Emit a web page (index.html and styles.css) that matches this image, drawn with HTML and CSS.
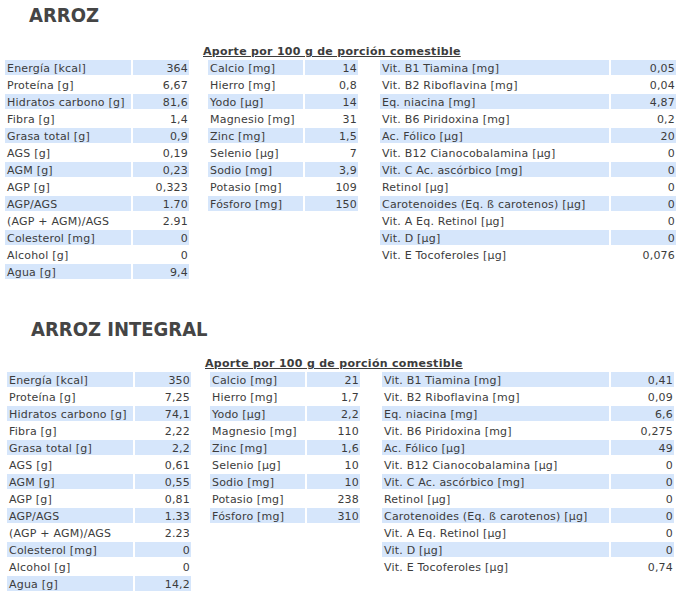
FILE: index.html
```html
<!DOCTYPE html>
<html lang="es">
<head>
<meta charset="utf-8">
<title>Arroz</title>
<link rel="stylesheet" href="styles.css">
</head>
<body>
<section class="food">
  <h1 class="food-title">ARROZ</h1>
  <div class="food-grid">
    <div class="food-heading">Aporte por 100 g de porción comestible</div>
    <table class="nt nt-1">
      <tr><td>Energía [kcal]</td><td>364</td></tr>
      <tr><td>Proteína [g]</td><td>6,67</td></tr>
      <tr><td>Hidratos carbono [g]</td><td>81,6</td></tr>
      <tr><td>Fibra [g]</td><td>1,4</td></tr>
      <tr><td>Grasa total [g]</td><td>0,9</td></tr>
      <tr><td>AGS [g]</td><td>0,19</td></tr>
      <tr><td>AGM [g]</td><td>0,23</td></tr>
      <tr><td>AGP [g]</td><td>0,323</td></tr>
      <tr><td>AGP/AGS</td><td>1.70</td></tr>
      <tr><td>(AGP + AGM)/AGS</td><td>2.91</td></tr>
      <tr><td>Colesterol [mg]</td><td>0</td></tr>
      <tr><td>Alcohol [g]</td><td>0</td></tr>
      <tr><td>Agua [g]</td><td>9,4</td></tr>
    </table>
    <table class="nt nt-2">
      <tr><td>Calcio [mg]</td><td>14</td></tr>
      <tr><td>Hierro [mg]</td><td>0,8</td></tr>
      <tr><td>Yodo [µg]</td><td>14</td></tr>
      <tr><td>Magnesio [mg]</td><td>31</td></tr>
      <tr><td>Zinc [mg]</td><td>1,5</td></tr>
      <tr><td>Selenio [µg]</td><td>7</td></tr>
      <tr><td>Sodio [mg]</td><td>3,9</td></tr>
      <tr><td>Potasio [mg]</td><td>109</td></tr>
      <tr><td>Fósforo [mg]</td><td>150</td></tr>
    </table>
    <table class="nt nt-3">
      <tr><td>Vit. B1 Tiamina [mg]</td><td>0,05</td></tr>
      <tr><td>Vit. B2 Riboflavina [mg]</td><td>0,04</td></tr>
      <tr><td>Eq. niacina [mg]</td><td>4,87</td></tr>
      <tr><td>Vit. B6 Piridoxina [mg]</td><td>0,2</td></tr>
      <tr><td>Ac. Fólico [µg]</td><td>20</td></tr>
      <tr><td>Vit. B12 Cianocobalamina [µg]</td><td>0</td></tr>
      <tr><td>Vit. C Ac. ascórbico [mg]</td><td>0</td></tr>
      <tr><td>Retinol [µg]</td><td>0</td></tr>
      <tr><td>Carotenoides (Eq. ß carotenos) [µg]</td><td>0</td></tr>
      <tr><td>Vit. A Eq. Retinol [µg]</td><td>0</td></tr>
      <tr><td>Vit. D [µg]</td><td>0</td></tr>
      <tr><td>Vit. E Tocoferoles [µg]</td><td>0,076</td></tr>
    </table>
  </div>
</section>

<section class="food food-second">
  <h1 class="food-title">ARROZ INTEGRAL</h1>
  <div class="food-grid">
    <div class="food-heading">Aporte por 100 g de porción comestible</div>
    <table class="nt nt-1">
      <tr><td>Energía [kcal]</td><td>350</td></tr>
      <tr><td>Proteína [g]</td><td>7,25</td></tr>
      <tr><td>Hidratos carbono [g]</td><td>74,1</td></tr>
      <tr><td>Fibra [g]</td><td>2,22</td></tr>
      <tr><td>Grasa total [g]</td><td>2,2</td></tr>
      <tr><td>AGS [g]</td><td>0,61</td></tr>
      <tr><td>AGM [g]</td><td>0,55</td></tr>
      <tr><td>AGP [g]</td><td>0,81</td></tr>
      <tr><td>AGP/AGS</td><td>1.33</td></tr>
      <tr><td>(AGP + AGM)/AGS</td><td>2.23</td></tr>
      <tr><td>Colesterol [mg]</td><td>0</td></tr>
      <tr><td>Alcohol [g]</td><td>0</td></tr>
      <tr><td>Agua [g]</td><td>14,2</td></tr>
    </table>
    <table class="nt nt-2">
      <tr><td>Calcio [mg]</td><td>21</td></tr>
      <tr><td>Hierro [mg]</td><td>1,7</td></tr>
      <tr><td>Yodo [µg]</td><td>2,2</td></tr>
      <tr><td>Magnesio [mg]</td><td>110</td></tr>
      <tr><td>Zinc [mg]</td><td>1,6</td></tr>
      <tr><td>Selenio [µg]</td><td>10</td></tr>
      <tr><td>Sodio [mg]</td><td>10</td></tr>
      <tr><td>Potasio [mg]</td><td>238</td></tr>
      <tr><td>Fósforo [mg]</td><td>310</td></tr>
    </table>
    <table class="nt nt-3">
      <tr><td>Vit. B1 Tiamina [mg]</td><td>0,41</td></tr>
      <tr><td>Vit. B2 Riboflavina [mg]</td><td>0,09</td></tr>
      <tr><td>Eq. niacina [mg]</td><td>6,6</td></tr>
      <tr><td>Vit. B6 Piridoxina [mg]</td><td>0,275</td></tr>
      <tr><td>Ac. Fólico [µg]</td><td>49</td></tr>
      <tr><td>Vit. B12 Cianocobalamina [µg]</td><td>0</td></tr>
      <tr><td>Vit. C Ac. ascórbico [mg]</td><td>0</td></tr>
      <tr><td>Retinol [µg]</td><td>0</td></tr>
      <tr><td>Carotenoides (Eq. ß carotenos) [µg]</td><td>0</td></tr>
      <tr><td>Vit. A Eq. Retinol [µg]</td><td>0</td></tr>
      <tr><td>Vit. D [µg]</td><td>0</td></tr>
      <tr><td>Vit. E Tocoferoles [µg]</td><td>0,74</td></tr>
    </table>
  </div>
</section>
</body>
</html>
```

FILE: styles.css
```css
html, body {
  margin: 0;
  padding: 0;
  background: #ffffff;
}

body {
  font-family: "DejaVu Sans", Verdana, sans-serif;
  font-size: 11px;
  color: #3c3c3c;
}

.food {
  padding-left: 3px;
}

.food-second {
  margin-top: 36px;
  padding-left: 5px;
}

.food-title {
  margin: 3px 0 0 26px;
  font-family: "DejaVu Sans Condensed", "DejaVu Sans", sans-serif;
  font-stretch: condensed;
  font-size: 20px;
  line-height: 24px;
  font-weight: bold;
  color: #454545;
}

.food-grid {
  display: grid;
  grid-template-columns: 200px 175px auto;
  grid-template-rows: auto auto;
  align-items: start;
  margin-top: 18px;
}

.food-second .food-grid {
  margin-top: 16px;
}

.food-heading {
  grid-column: 2 / 4;
  grid-row: 1;
  font-weight: bold;
  text-decoration: underline;
  line-height: 13px;
  letter-spacing: 0.3px;
  color: #3c3c3c;
}

.nt {
  grid-row: 2;
  border-collapse: separate;
  border-spacing: 2px;
  table-layout: fixed;
}

.nt td {
  height: 12px;
  padding: 3px 2px 0 2px;
  line-height: 12px;
  letter-spacing: 0.2px;
  white-space: nowrap;
  overflow: hidden;
}

.nt td:last-child {
  text-align: right;
  padding-right: 1px;
}

.nt tr:nth-child(odd) td {
  background: #d6e6fb;
}

.nt-1 {
  grid-column: 1;
  width: 188px;
}
.nt-1 td:first-child { width: 122px; }
.nt-1 td:last-child { width: 53px; }

.nt-2 {
  grid-column: 2;
  margin-left: 3px;
  width: 154px;
}
.nt-2 td:first-child { width: 91px; }
.nt-2 td:last-child { width: 50px; }

.nt-3 {
  grid-column: 3;
  width: 300px;
}
.nt-3 td:first-child { width: 225px; }
.nt-3 td:last-child { width: 62px; }

.food-second .nt-3 {
  width: 296px;
}
.food-second .nt-3 td:first-child { width: 223px; }
.food-second .nt-3 td:last-child { width: 60px; }
```
